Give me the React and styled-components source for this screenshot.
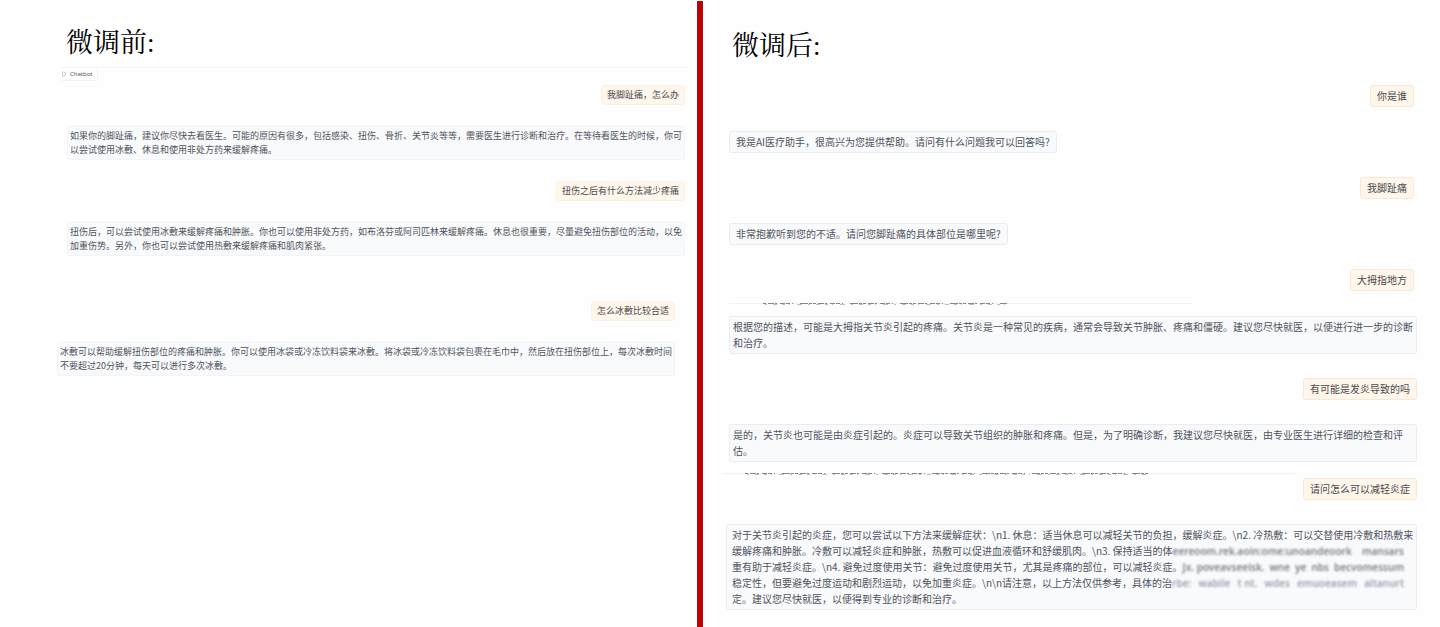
import React from "react";
import styled, { createGlobalStyle } from "styled-components";

const GlobalStyle = createGlobalStyle`
  * { box-sizing: border-box; }
  body {
    margin: 0;
    background: #fefefe;
    font-family: "Noto Sans CJK SC", sans-serif;
  }
`;

const Slide = styled.main`
  display: flex;
  min-height: 100vh;
`;

const Column = styled.section`
  flex: ${(p) => p.$share} 1 0;
  min-width: 0;
  padding-top: ${(p) => p.$top}px;
`;

const Divider = styled.div`
  flex: none;
  width: 6px;
  margin-top: 1px;
  background: #c00000;
  border: solid #a80d0d;
  border-width: 0 1px;
`;

const Title = styled.h1`
  margin: 0 0 0 ${(p) => p.$indent}px;
  font-family: "Liberation Serif", "Noto Serif CJK SC", "Noto Sans CJK SC", serif;
  font-size: 27px;
  font-weight: 400;
  line-height: 40px;
  color: #000;
`;

const PanelHeader = styled.header`
  display: flex;
  margin: 4px 9px 0 62px;
  border-top: 1px solid #f5f5f6;
`;

const Tag = styled.div`
  display: flex;
  align-items: center;
  gap: 4px;
  height: 13px;
  padding-right: 4px;
  border: solid #f1f1f3;
  border-width: 0 1px 1px 0;
  border-radius: 0 0 3px 0;
  font-family: "Noto Sans", sans-serif;
  font-size: 6px;
  line-height: 12px;
  color: #55585f;
`;

const Thread = styled.div`
  display: flex;
  flex-direction: column;
  gap: ${(p) => p.$gap}px;
  padding: ${(p) => p.$pad};
`;

const Bubble = styled.p`
  align-self: ${(p) => (p.$fill ? "stretch" : "flex-start")};
  margin: 0;
  padding: 2px ${(p) => p.$inset}px;
  border: 1px solid ${(p) => (p.$large ? "#e9ecf1" : "#f1f4f8")};
  border-radius: 3px;
  background: #f9fafc;
  font-size: ${(p) => (p.$large ? 10 : 9)}px;
  line-height: ${(p) => (p.$large ? 16 : 14)}px;
  color: #50535c;
  white-space: nowrap;
`;

const UserBubble = styled(Bubble)`
  align-self: flex-end;
  border-color: ${(p) => (p.$large ? "#fae6d2" : "#fdf0e3")};
  background: #fff6ec;
  color: #4a4a4c;
`;

const Line = styled.span`
  display: flex;
`;

const Smeared = styled.span`
  flex: 1;
  display: flex;
  justify-content: space-between;
  padding: 0 7px 0 0;
  font-family: "Noto Sans", sans-serif;
  font-weight: 600;
  color: ${(p) => (p.$faint ? "#9a9fae" : "#7b7e86")};
  filter: blur(1px);
`;

const Seam = styled.svg`
  display: block;
  width: 100%;
  height: 4px;
  margin: ${(p) => p.$margin};
`;

function Lines({ items }) {
  return items.map((text) => <Line key={text}>{text}</Line>);
}

function CutEdge({ from, start, end, rule, margin }) {
  return (
    <Seam $margin={margin} aria-hidden="true">
      <path d={`M${from} 1.500H${rule}`} stroke="#f1f2f4" />
      <path d={`M${start} 1.500H${end}`} stroke="#85878c" strokeDasharray="3 2 6 1 2 3 5 1 4 2 1 7 8 1 3 1" />
      <path d={`M${start + 2} 2.500H${end}`} stroke="#b9bbc0" strokeDasharray="2 6 4 5 3 4 1 7 5 6" />
    </Seam>
  );
}

export default function App() {
  return (
    <>
      <GlobalStyle />
      <Slide>
        <Column $share={697} $top={23}>
          <Title $indent={66}>微调前:</Title>
          <PanelHeader>
            <Tag>
              <svg width="4" height="6" viewBox="0 0 4 6" fill="none" stroke="#c9cbd0" aria-hidden="true">
                <path d="M0.500 1h1q2 0 2 2t-2 2h-1z" />
              </svg>
              Chatbot
            </Tag>
          </PanelHeader>
          <Thread $gap={21} $pad="4px 12px 0 67px">
            <UserBubble $inset={5}>我脚趾痛，怎么办</UserBubble>
            <Bubble $fill $inset={2}>
              <Lines
                items={[
                  "如果你的脚趾痛，建议你尽快去看医生。可能的原因有很多，包括感染、扭伤、骨折、关节炎等等，需要医生进行诊断和治疗。在等待看医生的时候，你可",
                  "以尝试使用冰敷、休息和使用非处方药来缓解疼痛。",
                ]}
              />
            </Bubble>
            <UserBubble $inset={5}>扭伤之后有什么方法减少疼痛</UserBubble>
            <Bubble $fill $inset={2}>
              <Lines
                items={[
                  "扭伤后，可以尝试使用冰敷来缓解疼痛和肿胀。你也可以使用非处方药，如布洛芬或阿司匹林来缓解疼痛。休息也很重要，尽量避免扭伤部位的活动，以免",
                  "加重伤势。另外，你也可以尝试使用热敷来缓解疼痛和肌肉紧张。",
                ]}
              />
            </Bubble>
          </Thread>
          <Thread $gap={21} $pad="45px 22px 0 57px">
            <UserBubble $inset={5}>怎么冰敷比较合适</UserBubble>
            <Bubble $fill $inset={2}>
              <Lines
                items={[
                  "冰敷可以帮助缓解扭伤部位的疼痛和肿胀。你可以使用冰袋或冷冻饮料袋来冰敷。将冰袋或冷冻饮料袋包裹在毛巾中，然后放在扭伤部位上，每次冰敷时间",
                  "不要超过20分钟，每天可以进行多次冰敷。",
                ]}
              />
            </Bubble>
          </Thread>
        </Column>

        <Divider />

        <Column $share={737} $top={26}>
          <Title $indent={29}>微调后:</Title>
          <Thread $gap={24} $pad="19px 26px 0 26px">
            <UserBubble $large $inset={6}>你是谁</UserBubble>
            <Bubble $large $inset={6}>我是AI医疗助手，很高兴为您提供帮助。请问有什么问题我可以回答吗?</Bubble>
            <UserBubble $large $inset={6}>我脚趾痛</UserBubble>
            <Bubble $large $inset={6}>非常抱歉听到您的不适。请问您脚趾痛的具体部位是哪里呢?</Bubble>
            <UserBubble $large $inset={6}>大拇指地方</UserBubble>
          </Thread>
          <CutEdge from={26} start={60} end={304} rule={489} margin="11px 0 10px" />
          <Thread $gap={24} $pad="0 23px 0 26px">
            <Bubble $large $fill $inset={3}>
              <Lines
                items={[
                  "根据您的描述，可能是大拇指关节炎引起的疼痛。关节炎是一种常见的疾病，通常会导致关节肿胀、疼痛和僵硬。建议您尽快就医，以便进行进一步的诊断",
                  "和治疗。",
                ]}
              />
            </Bubble>
            <UserBubble $large $inset={6}>有可能是发炎导致的吗</UserBubble>
            <Bubble $large $fill $inset={3}>
              <Lines
                items={[
                  "是的，关节炎也可能是由炎症引起的。炎症可以导致关节组织的肿胀和疼痛。但是，为了明确诊断，我建议您尽快就医，由专业医生进行详细的检查和评",
                  "估。",
                ]}
              />
            </Bubble>
          </Thread>
          <CutEdge from={19} start={42} end={446} rule={592} margin="10px 0 2px" />
          <Thread $gap={24} $pad="0 23px 0 23px">
            <UserBubble $large $inset={6}>请问怎么可以减轻炎症</UserBubble>
            <Bubble $large $fill $inset={5}>
              <Line>
                {"对于关节炎引起的炎症，您可以尝试以下方法来缓解症状：\\n1. 休息：适当休息可以减轻关节的负担，缓解炎症。\\n2. 冷热敷：可以交替使用冷敷和热敷来"}
              </Line>
              <Line>
                {"缓解疼痛和肿胀。冷敷可以减轻炎症和肿胀，热敷可以促进血液循环和舒缓肌肉。\\n3. 保持适当的体"}
                <Smeared aria-hidden="true">
                  <span>eereoom.rek.aoin:ome:unoandeoork</span>
                  <span>mansars</span>
                </Smeared>
              </Line>
              <Line>
                {"重有助于减轻炎症。\\n4. 避免过度使用关节：避免过度使用关节，尤其是疼痛的部位，可以减轻炎症。"}
                <Smeared aria-hidden="true">
                  <span>Jx. poveavseeisk.</span>
                  <span>wne</span>
                  <span>ye</span>
                  <span>nbs</span>
                  <span>becvomessum</span>
                </Smeared>
              </Line>
              <Line>
                {"稳定性，但要避免过度运动和剧烈运动，以免加重炎症。\\n\\n请注意，以上方法仅供参考，具体的治"}
                <Smeared $faint aria-hidden="true">
                  <span>rbe:</span>
                  <span>wabile</span>
                  <span>t nt.</span>
                  <span>wdes</span>
                  <span>emuoeasem</span>
                  <span>altanurt</span>
                </Smeared>
              </Line>
              <Line>定。建议您尽快就医，以便得到专业的诊断和治疗。</Line>
            </Bubble>
          </Thread>
        </Column>
      </Slide>
    </>
  );
}
